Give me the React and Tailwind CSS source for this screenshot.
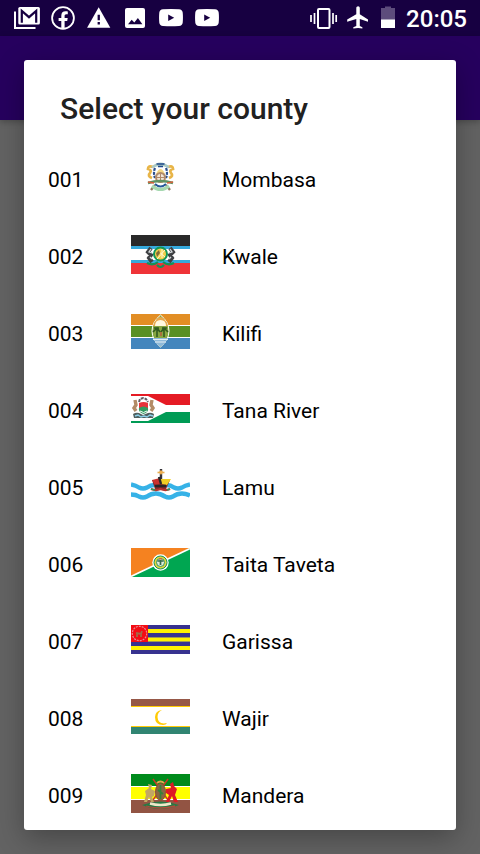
import React from 'react';

const icon = 'h-6 w-6 shrink-0';

function GmailIcon() {
  return (
    <svg className={icon} viewBox="0 0 24 24" overflow="visible" aria-hidden="true">
      <path d="M0 5.5V22H20.5" fill="none" stroke="#fff" strokeWidth="2" />
      <rect x="3.3" y="1" width="21.6" height="17.5" rx="1.6" fill="#fff" />
      <path d="M6.800 16.800V5L14 11.200 21.200 5v11.800" fill="none" stroke="#170041" strokeWidth="2.200" />
    </svg>
  );
}

function FacebookIcon() {
  return (
    <svg className={icon} viewBox="0 0 24 24" aria-hidden="true">
      <circle cx="12" cy="12" r="10.9" fill="none" stroke="#fff" strokeWidth="1.8" />
      <path d="M10.3 22v-7H7.6v-3.1h2.7V9.7c0-2.9 1.6-4.4 4.2-4.4.9 0 1.8.1 2.3.2v2.7h-1.4c-1.4 0-1.8.8-1.8 1.8v1.9h3.1l-.5 3.1h-2.6v7Z" fill="#fff" />
    </svg>
  );
}

function WarningIcon() {
  return (
    <svg className={icon} viewBox="0 0 24 24" aria-hidden="true">
      <path d="M11.7 1.3 23.3 21.8H.1Z" fill="#fff" />
      <path d="M10.6 8.7h2.3v5.6h-2.3Zm0 7.3h2.3v2.4h-2.3Z" fill="#170041" />
    </svg>
  );
}

function ImageIcon() {
  return (
    <svg className={icon} viewBox="0 0 24 24" aria-hidden="true">
      <rect x="2" y="2" width="20" height="20" rx="2" fill="#fff" />
      <path d="m5 18.300 3.700-4.500 2.600 2.800 3.600-4.600 4.500 6.300Z" fill="#170041" />
    </svg>
  );
}

function VideoIcon() {
  return (
    <svg className={icon} viewBox="0 0 24 24" aria-hidden="true">
      <path d="M4 3.300q8-.7 16 0 3.300.2 3.700 3.200.5 5 0 10.200-.4 3-3.700 3.200-8 .6-16 0-3.300-.2-3.700-3.200-.5-5 0-10.200Q.7 3.500 4 3.300Z" fill="#fff" />
      <path d="m9.200 8.500 6 3.300-6 3.300Z" fill="#170041" />
    </svg>
  );
}

function VibrateIcon() {
  return (
    <svg className="h-6 w-[30px] shrink-0" viewBox="0 0 30 24" aria-hidden="true">
      <rect x="8" y="3" width="11.500" height="19" rx="1" fill="none" stroke="#fff" strokeWidth="2" />
      <path d="M1 9v7M4.500 7v11M23 7v11M26.200 9v7" stroke="#fff" strokeWidth="1.700" />
    </svg>
  );
}

function PlaneIcon() {
  return (
    <svg className={icon} viewBox="0 0 24 24" aria-hidden="true">
      <path d="M22 15.800v-2.200l-8.200-5.300V2c0-1-.8-1.800-1.700-1.800S10.300 1 10.300 2v6.300L1.200 13.600v2.200l9.100-2.800v7l-3 1.300v1.300l4.800-.6 4.300.6v-1.300L13.800 20v-7Z" fill="#fff" />
    </svg>
  );
}

function BatteryIcon() {
  return (
    <svg className={icon} viewBox="0 0 24 24" aria-hidden="true">
      <path d="M9 .5h6V2h4v12H5V2h4Z" fill="#5d4c7c" />
      <path d="M5 13.500h14V22H5Z" fill="#fff" />
    </svg>
  );
}

function MombasaFlag() {
  return (
    <svg className="h-[39px] w-[59px]" viewBox="0 0 59 39" aria-hidden="true">
      <path d="M22 9q-5-2-5 2 4 1 2 4-3 3 2 5M37 9q5-2 5 2-4 1-2 4 3 3-2 5" fill="none" stroke="#e8b548" strokeWidth="2.800" />
      <path d="M20 9q9.500-9 19 0l-2 1q-7.500-4-15 0Z" fill="#abcac5" />
      <path d="M25.500 6h8M27 8.500h5" stroke="#214a8c" strokeWidth="1.600" />
      <path d="M24 10q-2 5 0 10M35 10q2 5 0 10" fill="none" stroke="#2c5190" strokeWidth="2.200" strokeDasharray="3 1" />
      <path d="M25 16q4.500-10 9 0Z" fill="#f4d784" />
      <circle cx="29.500" cy="19.500" r="4.500" fill="#f3e6d8" stroke="#b28b6a" strokeWidth="2" />
      <path d="M29.500 16v7M26 19.500h7" stroke="#b28b6a" />
      <path d="M17 25q12.500-4 25 0" fill="none" stroke="#5f9160" strokeWidth="2.400" />
      <path d="m17 24 6 1M36 25l6-1" stroke="#d5603c" strokeWidth="1.600" />
      <path d="m24 27-4 5M35 27l4 5" stroke="#8e7b61" strokeWidth="2.400" />
      <path d="M21 28q8.500 7 17 0" fill="none" stroke="#a6d8b0" strokeWidth="3" />
      <path d="M24 26q5.500 5 11 0" fill="none" stroke="#265a9a" strokeWidth="2" />
    </svg>
  );
}

function KwaleFlag() {
  return (
    <svg className="h-[39px] w-[59px]" viewBox="0 0 59 39" aria-hidden="true">
      <path d="M0 0h59v39H0Z" fill="#fff" />
      <path d="M0 0h59v11H0Z" fill="#292929" />
      <path d="M0 11h59v3H0ZM0 25h59v3H0Z" fill="#35a9dc" />
      <path d="M0 28h59v11H0Z" fill="#ef3338" />
      <path d="m20 13-3 4 3 3-2 3 3 4M39 13l3 4-3 3 2 3-3 4" fill="none" stroke="#3f4144" strokeWidth="4" />
      <path d="m20 14-2 3 3 1M39 14l2 3-3 1M19 22l2 2M40 22l-2 2" fill="none" stroke="#d2d8d9" strokeWidth="1.300" />
      <path d="M16 28q6 3 11-1M43 28q-6 3-11-1M26 30q3.500 4 7 0" fill="none" stroke="#129357" strokeWidth="2.200" />
      <circle cx="29.500" cy="19" r="6.500" fill="#f2cf4b" stroke="#139758" strokeWidth="2" />
      <path d="m26 24 8-9M27 16l7 6M31 14v9" stroke="#fff9d2" />
      <path d="m25 18 3-3 1 3-3 4Z" fill="#816c34" />
    </svg>
  );
}

function KilifiFlag() {
  return (
    <svg className="h-[35px] w-[59px]" viewBox="0 0 59 35" aria-hidden="true">
      <path d="M0 0h59v35H0Z" fill="#fff" />
      <path d="M0 0h59v11H0Z" fill="#e28e25" />
      <path d="M0 12h59v11H0Z" fill="#599024" />
      <path d="M0 24h59v11H0Z" fill="#4486bd" />
      <path d="M29.500 1Q38 8 38 17t-8.500 16Q21 26 21 17t8.500-16Z" fill="#87a642" stroke="#fff" />
      <path d="M23 9q6.500-12 13 0l1 3H22Z" fill="#e9a84c" />
      <path d="M24 12q0-6 5.500-6T35 12Z" fill="#fff7df" />
      <path d="M22 24h15q-2 5-7.500 8.500Q24 29 22 24Z" fill="#8db9da" />
      <path d="M22 25.500h15M24 28h11" stroke="#e3edf2" />
      <path d="m22 18 4-4 3 4M37 18l-4-4-3 4M26 15v8M33 15v8M23 14h5M31 14h5" fill="none" stroke="#315b20" strokeWidth="1.600" />
      <path d="M29 18h2v4h-2Z" fill="#aa703e" />
    </svg>
  );
}

function TanaRiverFlag() {
  return (
    <svg className="h-[29px] w-[59px]" viewBox="0 0 59 29" aria-hidden="true">
      <path d="M0 0h59v29H0Z" fill="#fff" />
      <path d="M0 0h59v11H35L17 2H0Z" fill="#e51b24" />
      <path d="M0 29h59V18H35L17 27H0Z" fill="#009b55" />
      <path d="m4 6 1 5-2 3 2 3M21 6l-1 5 2 3-2 3" fill="none" stroke="#b38c67" strokeWidth="3.400" />
      <path d="m8 8 1-3 3-1 3 1 2 3" fill="none" stroke="#615b64" strokeWidth="2" strokeDasharray="3 1" />
      <path d="M8 9q4.500-2 9 0v5H8Z" fill="#e6333b" />
      <path d="M8 14q4.500-3 9 0 1 4-4.500 6Q7 18 8 14Z" fill="#319b60" />
      <path d="M2 20q3-2 6-1l4 2 5-2q3-1 6 1l-1 4H3Z" fill="#50605f" />
      <path d="m4 22 3-1 3 2 3-1 3 1 3-2 3 1" fill="none" stroke="#8bd0e8" strokeWidth="1.400" />
      <path d="M9 17q3.500 3 7 0" fill="none" stroke="#fff" />
    </svg>
  );
}

function LamuFlag() {
  return (
    <svg className="h-[39px] w-[59px]" viewBox="0 0 59 39" aria-hidden="true">
      <path d="M0 18.500q5 1 8 3 4 2 8 0 4-3 9-2.500h9q5-.5 9 2.500 4 2 8 0 3-2 8-3M0 28.500q5 0 8 2 4 2 8 0 4-3 9-3 4 0 9 3 4 2 8 0 4-3 9-3 4 0 8 2" fill="none" stroke="#36b2e7" strokeWidth="4.500" />
      <path d="M30 3v10" stroke="#343238" strokeWidth="2.400" />
      <path d="M26.500 6.500h7" stroke="#e8ad4e" strokeWidth="1.600" />
      <path d="m28 6 2-2 2 2-2 3Z" fill="#efae4d" />
      <path d="M21 14h18l-4 9H24Z" fill="#7f2929" />
      <path d="M30 13h10l-4 6-6-1Z" fill="#f0cf24" />
      <path d="m21 14 8-2 1 6-6 1Z" fill="#c9332f" />
      <path d="M24 20h11M28 11l2 7" stroke="#282728" strokeWidth="2.400" />
      <path d="M20 23q5 2 9.500 0 5 2 9.500 0" fill="none" stroke="#b9362f" strokeWidth="2.400" />
      <path d="m20 23 4 1M36 24l3-1" stroke="#2b9962" strokeWidth="1.500" />
    </svg>
  );
}

function TaitaTavetaFlag() {
  return (
    <svg className="h-[29px] w-[59px]" viewBox="0 0 59 29" aria-hidden="true">
      <path d="M0 0h59v29H0Z" fill="#00a651" />
      <path d="M0 0h59L0 29Z" fill="#f58220" />
      <path d="M0 28.500 59 .5" stroke="#fff" strokeWidth="1.600" />
      <circle cx="29.500" cy="14.500" r="8.200" fill="#fff" />
      <circle cx="29.500" cy="14.500" r="6.500" fill="#e2d33d" stroke="#159553" />
      <circle cx="29.500" cy="14.500" r="4" fill="#dfebd9" stroke="#349960" />
      <path d="M26.500 13h6M29.500 12v5" stroke="#356b4d" strokeWidth="1.700" />
      <path d="M28 11h3" stroke="#df4b35" />
    </svg>
  );
}

function GarissaFlag() {
  return (
    <svg className="h-[29px] w-[59px]" viewBox="0 0 59 29" aria-hidden="true">
      <path d="M0 0h59v29H0Z" fill="#37328f" />
      <path d="M17 4h42v4H17ZM17 12h42v5H17ZM0 21h59v4H0Z" fill="#fff200" />
      <path d="M17 12.500h42M17 16.500h42" stroke="#a29a52" />
      <path d="M0 0h17v17H0Z" fill="#f30c13" />
      <circle cx="8.500" cy="8.500" r="7.200" fill="none" stroke="#e58c98" strokeWidth="1.200" strokeDasharray="2 1" />
      <path d="m5 8 5 1 1-3M6 8v4M10 8v4" fill="none" stroke="#a26a47" strokeWidth="1.800" />
    </svg>
  );
}

function WajirFlag() {
  return (
    <svg className="h-[35px] w-[59px]" viewBox="0 0 59 35" aria-hidden="true">
      <path d="M0 0h59v35H0Z" fill="#fff" />
      <path d="M0 0h59v7H0Z" fill="#965847" />
      <path d="M0 7h59v1H0ZM0 27h59v1H0Z" fill="#ffcb05" />
      <path d="M0 28h59v7H0Z" fill="#318572" />
      <path d="M31 11q-7 1-7 7 0 8 8 8 3 0 4-2-9 2-9.500-6 0-5 4.500-7Z" fill="#ffcb05" />
    </svg>
  );
}

function ManderaFlag() {
  return (
    <svg className="h-[39px] w-[59px]" viewBox="0 0 59 39" aria-hidden="true">
      <path d="M0 0h59v39H0Z" fill="#ff0" />
      <path d="M0 0h59v12H0Z" fill="#008b1c" />
      <path d="M0 12h59v1H0ZM0 25h59v1H0Z" fill="#fff" />
      <path d="M0 26h59v13H0Z" fill="#925443" />
      <path d="m22 5 15 21M37 5 22 26" stroke="#c93a28" strokeWidth="1.500" />
      <path d="m17 10 4 1-1 4 4 2-1 5-2 1 2 5h-3l-2-5-2 5h-3l2-7-1-4 4-3Z" fill="#c2a663" />
      <path d="m42 8 1 4 3 3-2 6 3 7h-4l-2-6-3 6h-3l3-7-3-2v-4l5-1-1-4Z" fill="#de1b24" />
      <ellipse cx="29.500" cy="18" rx="5" ry="8.500" fill="#886844" stroke="#994d30" />
      <path d="M29.500 11v14M27 16l5 4" stroke="#38823b" strokeWidth="1.700" />
      <path d="M26 9q3.500-3 7 0" fill="none" stroke="#e8a24e" strokeWidth="2" />
      <path d="M11 31q18.500-7 37 0-18.500 8-37 0Z" fill="#287944" />
      <path d="M15 32q14 4 29 0" fill="none" stroke="#b04b3c" strokeWidth="1.300" />
      <path d="M19 29.500q10.500 3 21 0" fill="none" stroke="#eee8c8" strokeWidth="2.400" />
    </svg>
  );
}

const counties = [
  { code: '001', name: 'Mombasa', Flag: MombasaFlag },
  { code: '002', name: 'Kwale', Flag: KwaleFlag },
  { code: '003', name: 'Kilifi', Flag: KilifiFlag },
  { code: '004', name: 'Tana River', Flag: TanaRiverFlag },
  { code: '005', name: 'Lamu', Flag: LamuFlag },
  { code: '006', name: 'Taita Taveta', Flag: TaitaTavetaFlag },
  { code: '007', name: 'Garissa', Flag: GarissaFlag },
  { code: '008', name: 'Wajir', Flag: WajirFlag },
  { code: '009', name: 'Mandera', Flag: ManderaFlag },
];

export default function App() {
  return (
    <div className="flex h-screen flex-col overflow-hidden bg-[#636363] font-['Roboto','Noto_Sans',sans-serif]">
      <header className="flex h-9 shrink-0 items-center justify-between bg-[#170041] pr-[13px] pl-[15px]">
        <div className="flex gap-3">
          <GmailIcon />
          <FacebookIcon />
          <WarningIcon />
          <ImageIcon />
          <VideoIcon />
          <VideoIcon />
        </div>
        <div className="flex items-center gap-1.5">
          <VibrateIcon />
          <PlaneIcon />
          <BatteryIcon />
          <time className="pt-0.5 text-2xl font-medium text-white">20:05</time>
        </div>
      </header>
      <main className="relative flex-1">
        <div className="h-[84px] bg-[#26005e] shadow-[0_2px_6px_rgba(0,0,0,0.25)]" />
        <div className="absolute inset-0 flex p-6">
          <section
            role="dialog"
            aria-labelledby="dialog-title"
            className="flex min-h-0 flex-1 flex-col overflow-hidden rounded-[3px] bg-white shadow-[0_8px_28px_rgba(0,0,0,0.3)]"
          >
            <h1 id="dialog-title" className="shrink-0 px-9 pt-[29px] pb-2.5 text-3xl leading-10 font-medium text-[#212121]">
              Select your county
            </h1>
            <ul className="min-h-0 flex-1 overflow-hidden">
              {counties.map(({ code, name, Flag }) => (
                <li key={code}>
                  <button type="button" className="flex h-[77px] w-full items-center px-6 text-left text-[21px] leading-6 text-black">
                    <span className="w-[83px] pt-1">{code}</span>
                    <Flag />
                    <span className="pt-1 pl-8">{name}</span>
                  </button>
                </li>
              ))}
            </ul>
          </section>
        </div>
      </main>
    </div>
  );
}
